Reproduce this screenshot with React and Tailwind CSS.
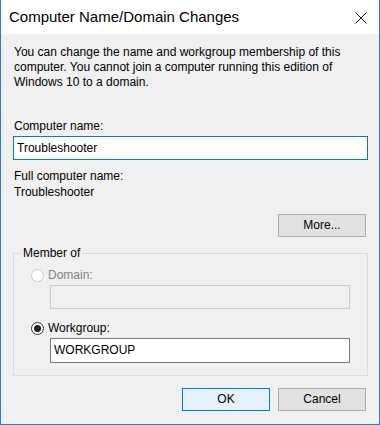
import React from "react";

function Radio({ checked, disabled }) {
  return (
    <span
      className={`flex h-[13px] w-[13px] items-center justify-center rounded-full border bg-white ${
        disabled ? "border-[#cccccc]" : "border-[#333333]"
      }`}
    >
      {checked && <span className="h-[7px] w-[7px] rounded-full bg-[#222222]" />}
    </span>
  );
}

function Button({ children, primary }) {
  return (
    <div
      className={`flex h-[23px] w-[88px] items-center justify-center border text-[12px] text-black ${
        primary ? "border-[#0078d7] bg-[#e5f1fb]" : "border-[#adadad] bg-[#e1e1e1]"
      }`}
    >
      {children}
    </div>
  );
}

export default function App() {
  return (
    <div
      className="flex h-[425px] w-[380px] flex-col border-x border-b border-[#2b7bd3] bg-[#f0f0f0] text-black"
      style={{ fontFamily: '"Liberation Sans", Arial, sans-serif' }}
    >
      {/* title bar */}
      <div className="flex h-[34px] shrink-0 items-center justify-between bg-white pl-[8px] pr-[12px]">
        <span className="text-[15px] leading-[18px]">Computer Name/Domain Changes</span>
        <svg width="12" height="12" viewBox="0 0 12 12" className="mt-[1px]">
          <path d="M0.5 0.5 L11.5 11.5 M11.5 0.5 L0.5 11.5" stroke="#111" strokeWidth="1" />
        </svg>
      </div>

      <div className="flex flex-1 flex-col px-[12px] text-[12px] leading-[15px]">
        <p className="mt-[11px] pl-[1px]">
          You can change the name and workgroup membership of this
          <br />
          computer. You cannot join a computer running this edition of
          <br />
          Windows 10 to a domain.
        </p>

        <div className="mt-[29px] pl-[1px]">Computer name:</div>
        <div className="mt-[2px] flex h-[24px] w-[355px] items-center border border-[#0078d7] bg-white pl-[3px]">
          Troubleshooter
        </div>

        <div className="mt-[9px] pl-[1px]">Full computer name:</div>
        <div className="mt-[1px] pl-[1px]">Troubleshooter</div>

        <div className="mt-[14px] flex justify-end pr-[1px]">
          <Button>More...</Button>
        </div>

        <fieldset className="mt-[9px] w-[355px] border border-[#dcdcdc] pb-[12px]">
          <legend className="ml-[7px] px-[2px]">Member of</legend>
          <div className="pl-[17px]">
            <div className="mt-[7px] flex items-center gap-[4px] text-[#838383]">
              <Radio disabled />
              <span>Domain:</span>
            </div>
            <div className="ml-[19px] mt-[2px] h-[24px] w-[300px] border border-[#cccccc] bg-[#f0f0f0]" />
            <div className="mt-[12px] flex items-center gap-[4px]">
              <Radio checked />
              <span>Workgroup:</span>
            </div>
            <div className="ml-[19px] mt-[2px] flex h-[25px] w-[300px] items-center border border-[#7a7a7a] bg-white pl-[3px]">
              WORKGROUP
            </div>
          </div>
        </fieldset>

        <div className="mt-[12px] flex justify-end gap-[8px] pr-[1px]">
          <Button primary>OK</Button>
          <Button>Cancel</Button>
        </div>
      </div>
    </div>
  );
}
